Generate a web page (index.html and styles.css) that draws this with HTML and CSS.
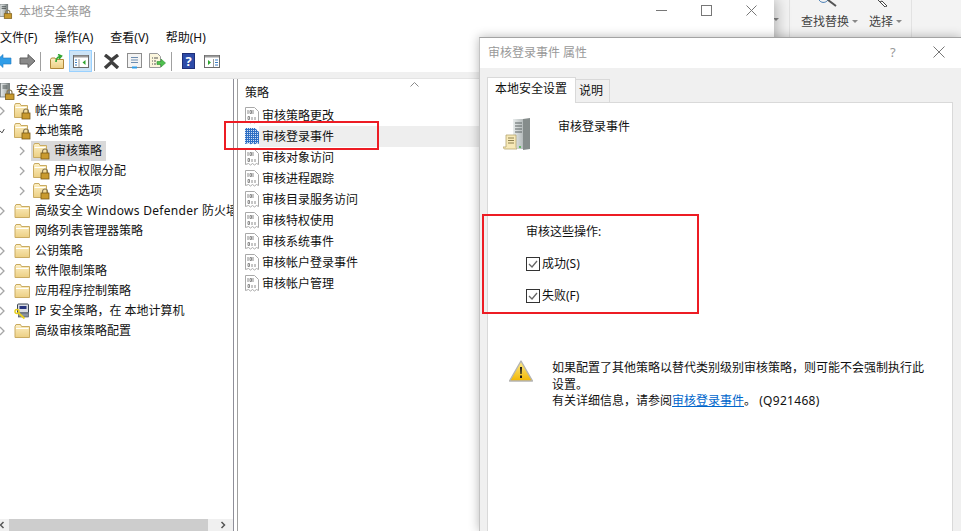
FILE: index.html

```html
<!DOCTYPE html>
<html lang="zh-CN">
<head>
  <meta charset="UTF-8" />
  <title>本地安全策略</title>
  <link rel="stylesheet" href="styles.css">
</head>
<body>
  <svg class="defs" width="0" height="0">
    <defs>
      <linearGradient id="fold" x1="0" y1="0" x2="0" y2="1">
        <stop offset="0" stop-color="#fdf0c4"/>
        <stop offset="1" stop-color="#eccf83"/>
      </linearGradient>
      <linearGradient id="warn" x1="0" y1="0" x2="0" y2="1">
        <stop offset="0" stop-color="#fdeb8c"/>
        <stop offset="1" stop-color="#f2b600"/>
      </linearGradient>
      <linearGradient id="srv" x1="0" y1="0" x2="1" y2="0">
        <stop offset="0" stop-color="#e8ecec"/>
        <stop offset=".55" stop-color="#b9bfbf"/>
        <stop offset="1" stop-color="#6f7675"/>
      </linearGradient>
      <pattern id="dither" width="2" height="2" patternUnits="userSpaceOnUse">
        <rect width="2" height="2" fill="#2f6fc4"/>
        <rect width="1" height="1" fill="#cfe0f5"/>
      </pattern>
      <symbol id="folder" viewBox="0 0 16 16">
        <path d="M.5 3.500v11h14.500V3.500H7L6 1.500H1.500z" fill="url(#fold)" stroke="#c9ab62"/>
        <path d="M1.500 5.500h12.500" stroke="#fff" fill="none"/>
      </symbol>
      <symbol id="folder-lock" viewBox="0 0 17 17">
        <path d="M.5 2.500v12h13V2.500H7L6 .5H1.500z" fill="url(#fold)" stroke="#c9ab62"/>
        <path d="M1.500 4.500h11" stroke="#fff" fill="none"/>
        <path d="M9.500 10V8.500a2.500 2.500 0 0 1 5 0V10" fill="none" stroke="#8a7a55" stroke-width="1.200"/>
        <rect x="8" y="10" width="8" height="6" fill="#c99a2e" stroke="#7b5b14" stroke-width=".8"/>
      </symbol>
      <symbol id="chevron" viewBox="0 0 6 10">
        <path d="M1 1l4 4-4 4" fill="none" stroke="#a6a6a6" stroke-width="1.300"/>
      </symbol>
      <symbol id="chevron-open" viewBox="0 0 8 8">
        <path d="M1 3.500l3 3 3-5" fill="none" stroke="#404040" stroke-width="1.300"/>
      </symbol>
      <symbol id="audit" viewBox="0 0 14 17">
        <path d="M.5.500h9l4 4v11l-2-1-2 1.500-2-1.500-2 1.500-2-1.500-3 1z" fill="#fff" stroke="#a9a9a9"/>
        <path d="M3 3v4M8 3v4M5 3.500h1.500v3H5zM3 9.500h1.500v3H3zM7 10v3M10 10v3" fill="none" stroke="#8c8c8c"/>
      </symbol>
      <symbol id="audit-sel" viewBox="0 0 14 17">
        <path d="M0 0h10l4 4v12l-2-1-2 1.500-2-1.500-2 1.500-2-1.500-4 1z" fill="url(#dither)"/>
      </symbol>
      <symbol id="tree-root" viewBox="0 0 16 17">
        <rect x="1" y="0" width="9" height="14" fill="url(#srv)" stroke="#6d7475" stroke-width=".8"/>
        <path d="M3 3h5M3 5h5" stroke="#4b5253"/>
        <path d="M7.500 11V9.500a2.500 2.500 0 0 1 5 0V11" fill="none" stroke="#8a7a55" stroke-width="1.200"/>
        <rect x="6" y="11" width="8.500" height="5.500" fill="#c99a2e" stroke="#7b5b14" stroke-width=".8"/>
      </symbol>
      <symbol id="ip-policy" viewBox="0 0 16 17">
        <rect x="3" y="1" width="11" height="9" rx="1" fill="#d8dce2" stroke="#3c4652"/>
        <rect x="5" y="3" width="7" height="3" fill="#26347e"/>
        <rect x="4" y="10" width="10" height="4" fill="#8a93a0" stroke="#3c4652" stroke-width=".6"/>
        <circle cx="2.500" cy="8.500" r="2" fill="none" stroke="#e8cf1e" stroke-width="1.500"/>
        <path d="M4 10l6 5.500" stroke="#e8cf1e" stroke-width="1.800"/>
      </symbol>
    </defs>
  </svg>

  <div class="ribbon">
    <svg class="ribbon-caret" width="6" height="4"><path d="M0 0h6L3 3z" fill="#888"/></svg>
    <div class="ribbon-group">
      <span class="ribbon-item">查找替换<svg width="6" height="4"><path d="M0 0h6L3 3z" fill="#888"/></svg></span>
      <span class="ribbon-item">选择<svg width="6" height="4"><path d="M0 0h6L3 3z" fill="#888"/></svg></span>
      <svg class="ribbon-find" width="20" height="7"><path d="M0 0c2 3 6 3 8 1l1-1M9 0l8 6" fill="none" stroke="#4a7fb5" stroke-width="1"/><path d="M9 0l8 6" stroke="#555" stroke-width="2"/></svg>
      <svg class="ribbon-select" width="12" height="7"><path d="M1 0l2 2 2-1 5 5-2 1-4-4z" fill="#fff" stroke="#444"/></svg>
    </div>
  </div>

  <div class="main-window">
    <div class="titlebar">
      <svg class="titlebar-icon" width="14" height="15"><use href="#tree-root"/></svg>
      <span class="titlebar-text">本地安全策略</span>
      <div class="winctrls">
        <span class="winctrl"><svg width="11" height="11"><path d="M0 5.500h11" stroke="#777"/></svg></span>
        <span class="winctrl"><svg width="11" height="11"><rect x=".5" y=".5" width="10" height="10" fill="none" stroke="#777"/></svg></span>
        <span class="winctrl"><svg width="11" height="11"><path d="M.5.500l10 10M10.500.500l-10 10" stroke="#777"/></svg></span>
      </div>
    </div>

    <div class="menubar">
      <span>文件(F)</span>
      <span>操作(A)</span>
      <span>查看(V)</span>
      <span>帮助(H)</span>
    </div>

    <div class="toolbar">
      <span class="tool"><svg width="16" height="14" viewBox="0 0 16 14"><path d="M0 7l7-6.500V4h8v6H7v3.500z" fill="#2f9de8" stroke="#1f78c0" stroke-width=".6"/></svg></span>
      <span class="tool"><svg width="16" height="14" viewBox="0 0 16 14"><path d="M16 7L9 .5V4H1v6h8v3.500z" fill="#8a8a8a" stroke="#5e5e5e"/></svg></span>
      <span class="toolsep"></span>
      <span class="tool">
        <svg width="15" height="15" viewBox="0 0 15 15"><path d="M.5 5.500v9h13v-9H6L5 4H1.500z" fill="url(#fold)" stroke="#b0883a"/><path d="M6 8c0-3 2-5 4-5.500M8 .5l3.500 1.500L9 5" fill="none" stroke="#2fa52f" stroke-width="1.600"/></svg>
      </span>
      <span class="tool tool-active">
        <svg width="16" height="13" viewBox="0 0 16 13"><rect x=".5" y=".5" width="15" height="12" fill="#fff" stroke="#6b6b6b"/><path d="M1 1.500h14" stroke="#9a9a9a" stroke-width="2"/><path d="M6 4v8" stroke="#9a9a9a"/><path d="M2 5h2M2 7.500h2M2 10h2" stroke="#3b7fc4"/><path d="M12.500 5v5l-3-2.500z" fill="#2fa52f"/></svg>
      </span>
      <span class="toolsep"></span>
      <span class="tool"><svg width="17" height="15" viewBox="0 0 17 15"><path d="M2 1l6.500 5L15 1M2 14l6.500-6L15 14" fill="none" stroke="#3f3f3f" stroke-width="3.400"/></svg></span>
      <span class="tool">
        <svg width="15" height="16" viewBox="0 0 15 16"><rect x=".5" y=".5" width="14" height="14" fill="#f4f4f4" stroke="#8d8d8d"/><path d="M4 4.500h7M4 7h7M4 9.500h7" stroke="#6d8db0"/><path d="M5 14.500h5" stroke="#2f9de8" stroke-width="2"/></svg>
      </span>
      <span class="tool">
        <svg width="17" height="16" viewBox="0 0 17 16"><path d="M.5.500h8l3 3v11H.5z" fill="#fbf6dd" stroke="#9a9a9a"/><path d="M3 5h1M5 5h4M3 8h1M5 8h2M3 11h1M5 11h2" stroke="#555"/><path d="M8 8.500h4V6l4.500 4-4.500 4v-2.500H8z" fill="#4fc04f" stroke="#2f8f2f" stroke-width=".6"/></svg>
      </span>
      <span class="toolsep"></span>
      <span class="tool tool-help">?</span>
      <span class="tool">
        <svg width="16" height="13" viewBox="0 0 16 13"><rect x=".5" y=".5" width="15" height="12" fill="#fff" stroke="#6b6b6b"/><path d="M1 1.500h14" stroke="#9a9a9a" stroke-width="2"/><path d="M9.500 4v8" stroke="#9a9a9a"/><path d="M11 5h3M11 7.500h3M11 10h3" stroke="#3b7fc4"/><path d="M4 5v5l3-2.500z" fill="#2fa52f"/></svg>
      </span>
    </div>

    <div class="panes">
      <div class="tree-pane">
        <div class="tree">
          <div class="tree-row lvl0"><svg class="tree-icon" width="16" height="17"><use href="#tree-root"/></svg><span>安全设置</span></div>
          <div class="tree-row lvl1"><svg class="chev" width="6" height="10"><use href="#chevron"/></svg><svg class="tree-icon" width="17" height="17"><use href="#folder-lock"/></svg><span>帐户策略</span></div>
          <div class="tree-row lvl1"><svg class="chev" width="6" height="10"><use href="#chevron-open"/></svg><svg class="tree-icon" width="17" height="17"><use href="#folder-lock"/></svg><span>本地策略</span></div>
          <div class="tree-row lvl2 is-current"><svg class="chev" width="6" height="10"><use href="#chevron"/></svg><span class="tree-pick"><svg class="tree-icon" width="17" height="17"><use href="#folder-lock"/></svg><span>审核策略</span></span></div>
          <div class="tree-row lvl2"><svg class="chev" width="6" height="10"><use href="#chevron"/></svg><svg class="tree-icon" width="17" height="17"><use href="#folder-lock"/></svg><span>用户权限分配</span></div>
          <div class="tree-row lvl2"><svg class="chev" width="6" height="10"><use href="#chevron"/></svg><svg class="tree-icon" width="17" height="17"><use href="#folder-lock"/></svg><span>安全选项</span></div>
          <div class="tree-row lvl1"><svg class="chev" width="6" height="10"><use href="#chevron"/></svg><svg class="tree-icon" width="16" height="16"><use href="#folder"/></svg><span>高级安全<span class="latin"> Windows Defender </span>防火墙</span></div>
          <div class="tree-row lvl1"><span class="chev"></span><svg class="tree-icon" width="16" height="16"><use href="#folder"/></svg><span>网络列表管理器策略</span></div>
          <div class="tree-row lvl1"><svg class="chev" width="6" height="10"><use href="#chevron"/></svg><svg class="tree-icon" width="16" height="16"><use href="#folder"/></svg><span>公钥策略</span></div>
          <div class="tree-row lvl1"><svg class="chev" width="6" height="10"><use href="#chevron"/></svg><svg class="tree-icon" width="16" height="16"><use href="#folder"/></svg><span>软件限制策略</span></div>
          <div class="tree-row lvl1"><svg class="chev" width="6" height="10"><use href="#chevron"/></svg><svg class="tree-icon" width="16" height="16"><use href="#folder"/></svg><span>应用程序控制策略</span></div>
          <div class="tree-row lvl1"><svg class="chev" width="6" height="10"><use href="#chevron"/></svg><svg class="tree-icon" width="16" height="17"><use href="#ip-policy"/></svg><span>IP 安全策略，在 本地计算机</span></div>
          <div class="tree-row lvl1"><svg class="chev" width="6" height="10"><use href="#chevron"/></svg><svg class="tree-icon" width="16" height="16"><use href="#folder"/></svg><span>高级审核策略配置</span></div>
        </div>
        <div class="hscroll">
          <svg class="hscroll-btn" width="9" height="12"><path d="M3.500 3l-3 3 3 3" fill="none" stroke="#555" stroke-width="1.500"/></svg>
          <span class="hscroll-thumb"></span>
          <svg class="hscroll-btn right" width="8" height="12"><path d="M1.500 3l3 3-3 3" fill="none" stroke="#555" stroke-width="1.500"/></svg>
        </div>
      </div>

      <div class="list-pane">
        <div class="list-head">
          <span>策略</span>
          <svg class="sort-arrow" width="9" height="5"><path d="M.5 4.500L4.500.5l4 4" fill="none" stroke="#8a8a8a"/></svg>
        </div>
        <div class="list-row"><svg width="14" height="17"><use href="#audit"/></svg><span class="list-text">审核策略更改</span></div>
        <div class="list-row is-picked"><svg width="14" height="17"><use href="#audit-sel"/></svg><span class="list-text">审核登录事件</span></div>
        <div class="list-row"><svg width="14" height="17"><use href="#audit"/></svg><span class="list-text">审核对象访问</span></div>
        <div class="list-row"><svg width="14" height="17"><use href="#audit"/></svg><span class="list-text">审核进程跟踪</span></div>
        <div class="list-row"><svg width="14" height="17"><use href="#audit"/></svg><span class="list-text">审核目录服务访问</span></div>
        <div class="list-row"><svg width="14" height="17"><use href="#audit"/></svg><span class="list-text">审核特权使用</span></div>
        <div class="list-row"><svg width="14" height="17"><use href="#audit"/></svg><span class="list-text">审核系统事件</span></div>
        <div class="list-row"><svg width="14" height="17"><use href="#audit"/></svg><span class="list-text">审核帐户登录事件</span></div>
        <div class="list-row"><svg width="14" height="17"><use href="#audit"/></svg><span class="list-text">审核帐户管理</span></div>
      </div>
    </div>
  </div>

  <div class="dialog">
    <div class="dialog-title">
      <span>审核登录事件 属性</span>
      <span class="dialog-help">?</span>
      <svg class="dialog-close" width="12" height="12"><path d="M.5.500l11 11M11.500.500l-11 11" stroke="#777"/></svg>
    </div>
    <div class="dialog-body">
      <div class="tabs">
        <span class="tab tab-active">本地安全设置</span>
        <span class="tab">说明</span>
      </div>
      <div class="panel">
        <div class="panel-head">
          <svg width="30" height="33" viewBox="0 0 30 33">
            <rect x="10" y="1" width="17" height="30" fill="url(#srv)"/>
            <path d="M20 1l7-1v31l-7 1z" fill="#858c8b"/>
            <path d="M12 5h7M12 8h7M12 11h7M12 14h7" stroke="#5d6565"/>
            <circle cx="17" cy="29" r="1" fill="#3fb03f"/>
            <path d="M3 17h10v12c0 1 1 2 1 2H2c-1 0-2-1-2-2h3z" fill="#f7e9b8" stroke="#b5a56f" stroke-width=".8"/>
            <path d="M5 20h6M5 22.500h6M5 25h6" stroke="#8d8050"/>
          </svg>
          <span>审核登录事件</span>
        </div>
        <div class="audit-group">
          <div class="audit-label">审核这些操作:</div>
          <label class="check-row"><svg width="14" height="14"><rect x=".5" y=".5" width="13" height="13" fill="#fff" stroke="#333"/><path d="M3 7l3 3 5-6" fill="none" stroke="#666" stroke-width="1.300"/></svg>成功(S)</label>
          <label class="check-row"><svg width="14" height="14"><rect x=".5" y=".5" width="13" height="13" fill="#fff" stroke="#333"/><path d="M3 7l3 3 5-6" fill="none" stroke="#666" stroke-width="1.300"/></svg>失败(F)</label>
        </div>
        <div class="notice">
          <svg width="24" height="22" viewBox="0 0 24 22">
            <path d="M12 1L23.500 21H.5z" fill="url(#warn)" stroke="#b4b4b4" stroke-width="1.400" stroke-linejoin="round"/>
            <path d="M11 7h2l-.4 7h-1.200zM11 15.500h2v2.500h-2z" fill="#1a1a1a"/>
          </svg>
          <div class="notice-text">
            <p>如果配置了其他策略以替代类别级别审核策略，则可能不会强制执行此设置。</p>
            <p>有关详细信息，请参阅<a class="notice-link" href="#">审核登录事件</a>。 <span class="latin">(Q921468)</span></p>
          </div>
        </div>
      </div>
    </div>
  </div>

  <div class="mark mark-row"></div>
  <div class="mark mark-group"></div>
</body>
</html>
```

FILE: styles.css

```css
* {
  box-sizing: border-box;
}
html, body {
  margin: 0;
  height: 100%;
}
body {
  position: relative;
  width: 961px;
  height: 531px;
  overflow: hidden;
  font-family: "Noto Sans", "Noto Sans CJK SC", sans-serif;
  font-size: 12px;
  line-height: 18px;
  color: #111;
  background: #f3f3f3;
}
svg {
  display: block;
  flex: none;
}
.defs {
  position: absolute;
}
.latin {
  letter-spacing: 0.3px;
}

/* ribbon of the app behind */
.ribbon {
  position: absolute;
  left: 774px;
  top: 0;
  width: 187px;
  height: 37px;
  background: #f3f3f3;
  color: #444;
}
.ribbon-caret {
  position: absolute;
  left: -1px;
  top: 18px;
}
.ribbon-group {
  position: relative;
  display: flex;
  gap: 11px;
  margin-left: 15px;
  width: 123px;
  height: 37px;
  padding: 13px 0 0 11px;
  border-left: 1px solid #e2e2e2;
  border-right: 1px solid #e2e2e2;
}
.ribbon-item {
  display: flex;
  align-items: center;
  gap: 3px;
  height: 18px;
  white-space: nowrap;
}
.ribbon-find {
  position: absolute;
  left: 29px;
  top: 0;
}
.ribbon-select {
  position: absolute;
  left: 87px;
  top: 0;
}

/* main mmc window */
.main-window {
  position: absolute;
  left: 0;
  top: 0;
  width: 774px;
  height: 531px;
  display: flex;
  flex-direction: column;
  background: #fff;
  box-shadow: 2px 0 14px rgba(0, 0, 0, 0.3);
}
.titlebar {
  display: flex;
  align-items: center;
  height: 22px;
}
.titlebar-icon {
  margin-left: -1px;
}
.titlebar-text {
  margin: 2px 0 0 6px;
  color: #999;
}
.winctrls {
  display: flex;
  margin: 0 0 1px auto;
}
.winctrl {
  display: flex;
  align-items: center;
  justify-content: center;
  width: 45px;
  height: 21px;
}
.menubar {
  display: flex;
  gap: 17px;
  height: 22px;
  margin-top: 5px;
  align-items: center;
  white-space: nowrap;
}
.toolbar {
  display: flex;
  align-items: center;
  height: 24px;
  margin: 0 0 0 -8px;
}
.tool {
  display: flex;
  align-items: center;
  justify-content: center;
  width: 23px;
  height: 22px;
}
.tool-active {
  background: #cce4f7;
  border: 1px solid #99d1ff;
}
.tool-help {
  width: 13px;
  height: 16px;
  margin: 0 5px;
  background: #2d4ba8;
  border: 1px solid #1f2f78;
  color: #fff;
  font-weight: 700;
  font-size: 13px;
}
.toolsep {
  width: 1px;
  height: 19px;
  margin: 0 5px 0 2px;
  background: #a0a0a0;
}
.panes {
  flex: 1;
  display: flex;
  min-height: 0;
  margin-top: 5px;
  border-top: 1px solid #e4e4e4;
  box-shadow: 0 -6px 0 #f0f0f0;
}

/* tree on the left */
.tree-pane {
  width: 234px;
  display: flex;
  flex-direction: column;
  border-right: 1px solid #8f8f99;
}
.tree {
  flex: 1;
  padding-top: 2px;
}
.tree-row {
  display: flex;
  align-items: center;
  height: 20px;
  white-space: nowrap;
  overflow: hidden;
}
.tree-icon {
  flex: none;
  width: 17px;
  margin-right: 4px;
}
.chev {
  display: block;
  width: 6px;
  flex: none;
}
.lvl0 .tree-icon {
  margin: 0 0 0 -1px;
}
.lvl1 .chev {
  margin: 0 9px 0 -1px;
}
.lvl2 .chev {
  margin: 0 8px 0 19px;
}
.tree-pick {
  display: flex;
  align-items: center;
  height: 20px;
}
.is-current .chev {
  margin-right: 6px;
}
.is-current .tree-pick {
  width: 75px;
  padding-left: 2px;
  background: #d9d9d9;
}
.hscroll {
  flex: none;
  display: flex;
  height: 12px;
  background: #f0f0f0;
  padding-right: 5px;
}
.hscroll-btn.right {
  margin-left: auto;
}
.hscroll-thumb {
  width: 199px;
  background: #cdcdcd;
}

/* list on the right */
.list-pane {
  position: relative;
  flex: 1;
  margin-left: 3px;
  border-left: 1px solid #a0a0a0;
}
.list-head {
  height: 26px;
  padding: 5px 0 0 7px;
}
.sort-arrow {
  position: absolute;
  left: 172px;
  top: 3px;
}
.list-row {
  display: flex;
  align-items: center;
  height: 21px;
  padding-left: 7px;
}
.list-text {
  display: flex;
  align-items: center;
  flex: 1;
  height: 21px;
  padding-left: 3px;
}
.is-picked .list-text {
  background: #eeeeee;
}

/* properties dialog */
.dialog {
  position: absolute;
  left: 479px;
  top: 37px;
  width: 482px;
  height: 494px;
  display: flex;
  flex-direction: column;
  background: #f0f0f0;
  border-top: 1px solid #a3a3a3;
  border-left: 1px solid #c4c4c4;
  box-shadow: 0 0 10px rgba(0, 0, 0, 0.28);
}
.dialog-title {
  position: relative;
  display: flex;
  align-items: center;
  height: 30px;
  padding-left: 8px;
  background: #fff;
  color: #999;
}
.dialog-help {
  position: absolute;
  left: 410px;
  top: 5px;
  font-size: 13px;
}
.dialog-close {
  position: absolute;
  left: 453px;
  top: 8px;
}
.dialog-body {
  flex: 1;
  display: flex;
  flex-direction: column;
  padding: 9px 8px 0 7px;
}
.tabs {
  display: flex;
  align-items: flex-end;
  height: 25px;
}
.tab {
  height: 23px;
  padding: 2px 6px 0 3px;
  margin-left: -1px;
  border: 1px solid #d9d9d9;
  border-bottom: none;
  white-space: nowrap;
}
.tab-active {
  position: relative;
  z-index: 1;
  height: 26px;
  width: 89px;
  margin: 0 0 -1px 0;
  padding: 2px 0 0 7px;
  background: #fff;
}
.panel {
  flex: 1;
  padding-top: 15px;
  background: #fff;
  border: 1px solid #d9d9d9;
  border-bottom: none;
}
.panel-head {
  display: flex;
  gap: 25px;
  margin-left: 15px;
  height: 33px;
}
.audit-group {
  margin: 72px 0 0 38px;
}
.audit-label {
  height: 18px;
}
.check-row {
  display: flex;
  align-items: center;
  gap: 2px;
  margin-top: 14px;
  height: 18px;
}
.notice {
  display: flex;
  gap: 19px;
  margin: 55px 0 0 21px;
}
.notice-text {
  width: 380px;
  line-height: 16.5px;
}
.notice-text p {
  margin: 0;
}
.notice-link {
  color: #0066cc;
}

/* red annotation frames over the screenshot */
.mark {
  position: absolute;
  border: 2px solid #ed1c24;
}
.mark-row {
  left: 224px;
  top: 121px;
  width: 155px;
  height: 29px;
}
.mark-group {
  left: 482px;
  top: 214px;
  width: 217px;
  height: 100px;
}
```
